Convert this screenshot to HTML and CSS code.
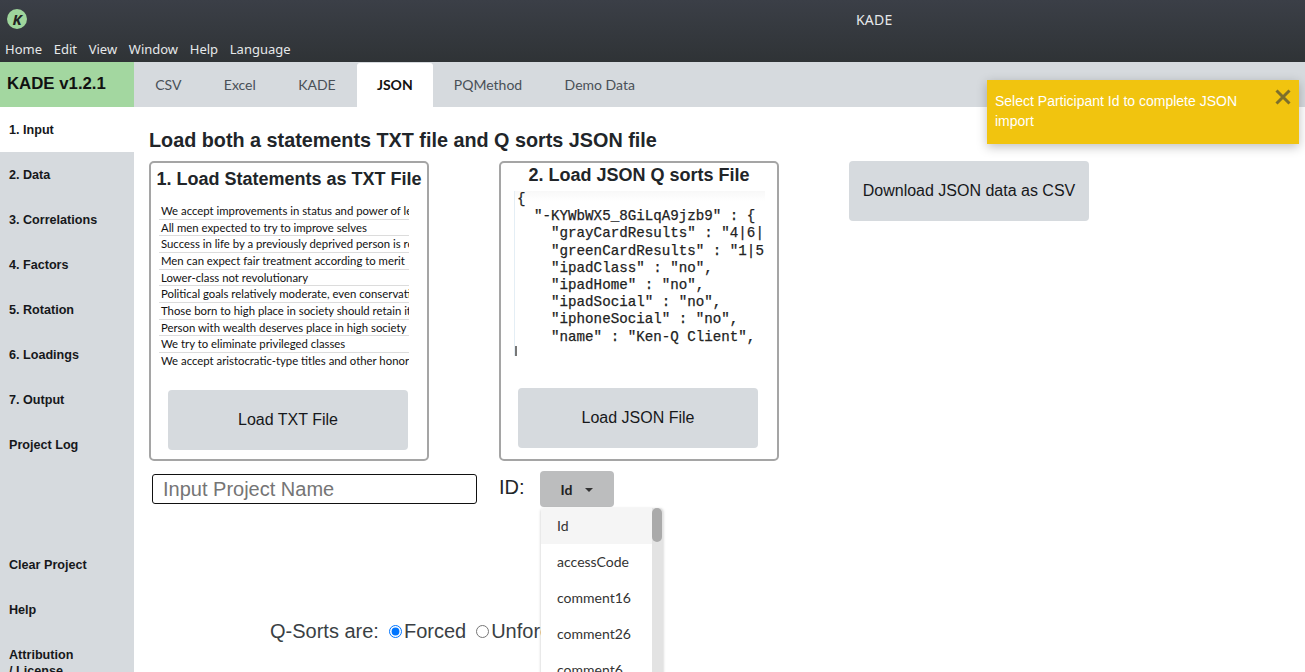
FILE: index.html
```html
<!doctype html>
<html lang="en">

<head>
    <meta charset="utf-8">
    <title>KADE</title>
    <link rel="stylesheet" href="styles.css">
</head>

<body>
<header class="titlebar">
    <div class="titlebar-top">
        <div class="logo">K</div>
        <div class="window-title">KADE</div>
    </div>
    <nav class="menubar">
        <span>Home</span>
        <span>Edit</span>
        <span>View</span>
        <span>Window</span>
        <span>Help</span>
        <span>Language</span>
    </nav>
</header>

<div class="tabrow">
    <div class="brand">KADE v1.2.1</div>
    <div class="tab">CSV</div>
    <div class="tab">Excel</div>
    <div class="tab">KADE</div>
    <div class="tab tab-active">JSON</div>
    <div class="tab">PQMethod</div>
    <div class="tab">Demo Data</div>
</div>

<div class="app">
    <aside class="sidebar">
        <div class="side-item side-active">1. Input</div>
        <div class="side-item">2. Data</div>
        <div class="side-item">3. Correlations</div>
        <div class="side-item">4. Factors</div>
        <div class="side-item">5. Rotation</div>
        <div class="side-item">6. Loadings</div>
        <div class="side-item">7. Output</div>
        <div class="side-item">Project Log</div>
        <div class="side-item side-gap">Clear Project</div>
        <div class="side-item">Help</div>
        <div class="side-item side-wrap">Attribution / License</div>
    </aside>

    <main class="content">
        <h1 class="page-title">Load both a statements TXT file and Q sorts JSON file</h1>

        <div class="cards">
            <section class="card">
                <h2 class="card-title card-title-txt">1. Load Statements as TXT File</h2>
                <ul class="statements">
                    <li>We accept improvements in status and power of leaders</li>
                    <li>All men expected to try to improve selves</li>
                    <li>Success in life by a previously deprived person is respected</li>
                    <li>Men can expect fair treatment according to merit</li>
                    <li>Lower-class not revolutionary</li>
                    <li>Political goals relatively moderate, even conservative</li>
                    <li>Those born to high place in society should retain it</li>
                    <li>Person with wealth deserves place in high society</li>
                    <li>We try to eliminate privileged classes</li>
                    <li>We accept aristocratic-type titles and other honors</li>
                </ul>
                <button class="btn btn-txt">Load TXT File</button>
            </section>

            <section class="card">
                <h2 class="card-title card-title-json">2. Load JSON Q sorts File</h2>
                <pre class="json-sample">{
  "-KYWbWX5_8GiLqA9jzb9" : {
    "grayCardResults" : "4|6|
    "greenCardResults" : "1|5
    "ipadClass" : "no",
    "ipadHome" : "no",
    "ipadSocial" : "no",
    "iphoneSocial" : "no",
    "name" : "Ken-Q Client",
<span class="cursor"></span></pre>
                <button class="btn btn-json">Load JSON File</button>
            </section>

            <button class="btn btn-download">Download JSON data as CSV</button>
        </div>

        <div class="id-row">
            <input class="project-input" placeholder="Input Project Name">
            <span class="id-label">ID:</span>
            <div class="dropdown">
                <div class="dropdown-btn">Id<span class="caret"></span></div>
                <div class="dropdown-menu">
                    <div class="dropdown-item dropdown-current">Id</div>
                    <div class="dropdown-item">accessCode</div>
                    <div class="dropdown-item">comment16</div>
                    <div class="dropdown-item">comment26</div>
                    <div class="dropdown-item">comment6</div>
                    <div class="scroll-thumb"></div>
                </div>
            </div>
        </div>

        <div class="sort-row">
            <span class="sort-label">Q-Sorts are:</span>
            <label class="radio"><input type="radio" name="sorts" checked>Forced</label>
            <label class="radio"><input type="radio" name="sorts">Unforced</label>
        </div>
    </main>
</div>

<!-- toast over the top right -->
<div class="toast">
    <span class="toast-text">Select Participant Id to complete JSON import</span>
    <span class="toast-close">
        <svg width="16" height="16" viewBox="0 0 16 16"><path d="M1.5 1.5 14.5 14.5M14.5 1.5 1.5 14.5" stroke="#7d6f2c" stroke-width="3" fill="none"/></svg>
    </span>
</div>
</body>

</html>
```

FILE: styles.css
```css
html, body {
    height: 100%;
}

body {
    margin: 0;
    overflow: hidden;
    background-color: #fff;
    color: #212529;
    font-family: "Liberation Sans", Arial, sans-serif;
}

/* title bar */
.titlebar {
    height: 62px;
    background: linear-gradient(#3b3f47, #2f3336);
    color: #e6e8ea;
    font-family: "Noto Sans", sans-serif;
}

.titlebar-top {
    height: 38px;
    display: flex;
    align-items: center;
}

.logo {
    width: 20px;
    height: 20px;
    margin-left: 7px;
    border-radius: 50%;
    background-color: #9fd69c;
    color: #222;
    font-size: 15px;
    font-weight: bold;
    font-style: italic;
    line-height: 20px;
    text-align: center;
}

.window-title {
    margin-left: 829px;
    font-size: 14px;
    letter-spacing: .2px;
}

.menubar {
    display: flex;
    gap: 11.7px;
    padding-left: 5px;
    font-size: 13px;
    line-height: 22px;
}

/* tabs */
.tabrow {
    height: 45px;
    display: flex;
    background-color: #d6dade;
    font-family: Lato, sans-serif;
    font-size: 14px;
    color: #495057;
}

.brand {
    width: 127px;
    padding-left: 7px;
    background-color: #a3d7a0;
    color: #111;
    font-family: "Liberation Sans", sans-serif;
    font-size: 16.8px;
    font-weight: bold;
    line-height: 44px;
}

.tab {
    padding: 0 21.2px;
    line-height: 46px;
}

.tab-active {
    margin-top: 1px;
    padding: 0 20px;
    background-color: #fff;
    border-radius: 3px 3px 0 0;
    color: #111;
    font-weight: bold;
    line-height: 44px;
}

/* sidebar + content */
.app {
    display: flex;
    height: 565px;
    overflow: hidden;
}

.sidebar {
    flex: 0 0 134px;
    background-color: #d6dade;
    font-size: 12.6px;
    font-weight: bold;
    color: #16181b;
}

.side-item {
    height: 45px;
    padding-left: 9px;
    line-height: 46px;
}

.side-active {
    background-color: #fff;
}

.side-gap {
    margin-top: 75px;
}

.side-wrap {
    width: 70px;
    line-height: 16px;
    padding-top: 15px;
}

.content {
    flex: 1;
    padding-left: 15px;
    min-width: 0;
}

.page-title {
    margin: 22px 0 9px;
    font-size: 19.8px;
    line-height: 23px;
}

.cards {
    display: flex;
    align-items: flex-start;
    gap: 70px;
}

.card {
    width: 276px;
    height: 296px;
    position: relative;
    display: flex;
    flex-direction: column;
    border: 2px solid #a5a5a5;
    border-radius: 5px;
}

.card-title {
    margin: 0;
    font-size: 18px;
    line-height: 21px;
    text-align: center;
    white-space: nowrap;
}

.card-title-txt {
    margin-top: 6px;
}

.card-title-json {
    margin-top: 2px;
}

.statements {
    width: 250px;
    height: 166px;
    margin: 13px 0 0 8px;
    padding: 0;
    list-style: none;
    overflow: hidden;
    font-family: Lato, sans-serif;
    font-size: 11.35px;
    color: #111;
}

.statements li {
    height: 15.67px;
    padding-left: 2px;
    border-bottom: 1px solid #dcdcdc;
    line-height: 15.67px;
    white-space: nowrap;
}

.statements li:last-child {
    border-bottom: 0;
}

.json-sample {
    width: 248px;
    height: 165px;
    margin: 5px 0 0 13px;
    padding-left: 2px;
    overflow: hidden;
    border-left: 1px solid #e4eef5;
    background: linear-gradient(#f8f8f8, #fff 10px);
    color: #222;
    font-family: "Liberation Mono", monospace;
    font-size: 14.2px;
    line-height: 17.2px;
    -webkit-text-stroke: .25px #222;
}

.cursor {
    display: inline-block;
    width: 2px;
    height: 12px;
    margin-left: -2px;
    vertical-align: 2px;
    background-color: #777;
}

.btn {
    width: 240px;
    height: 60px;
    border: 0;
    border-radius: 4px;
    background-color: #d6dade;
    color: #16181b;
    font-family: "Liberation Sans", sans-serif;
    font-size: 16px;
}

.btn-txt {
    margin: 21px 0 0 17px;
}

.btn-json {
    margin: 32px 0 0 17px;
}

.id-row {
    display: flex;
    align-items: flex-start;
    margin-top: 10px;
    height: 36px;
}

.project-input {
    box-sizing: border-box;
    width: 325px;
    height: 30px;
    margin: 3px 0 0 3px;
    padding: 0 10px;
    border: 1px solid #111;
    border-radius: 3px;
    font-family: "Liberation Sans", sans-serif;
    font-size: 20px;
}

.project-input::placeholder {
    color: #757575;
}

.id-label {
    margin-left: 22px;
    font-size: 20px;
    line-height: 32px;
}

.dropdown {
    position: relative;
    margin-left: 15px;
}

.dropdown-btn {
    display: flex;
    align-items: center;
    justify-content: center;
    width: 74px;
    height: 36px;
    border-radius: 4px;
    background-color: #bcbdbe;
    color: #222;
    font-family: Lato, sans-serif;
    font-size: 14px;
    font-weight: bold;
}

.caret {
    margin-left: 12px;
    margin-top: 2px;
    border-top: 4px solid #333;
    border-left: 4px solid transparent;
    border-right: 4px solid transparent;
}

.dropdown-menu {
    position: absolute;
    left: 1px;
    top: 37px;
    z-index: 5;
    width: 122px;
    height: 200px;
    overflow: hidden;
    background: linear-gradient(to left, #e3e3e3 11px, #fff 11px);
    box-shadow: 0 1px 3px rgba(0, 0, 0, .25);
    border-radius: 3px 3px 0 0;
    font-family: Lato, sans-serif;
    font-size: 14px;
    color: #333;
}

.dropdown-item {
    width: 94.5px;
    height: 36px;
    padding-left: 16.5px;
    line-height: 36px;
}

.dropdown-current {
    background-color: #f5f5f5;
}

.scroll-thumb {
    position: absolute;
    right: 1px;
    top: 0;
    width: 10px;
    height: 34px;
    border-radius: 5px;
    background-color: #aaa;
}

.sort-row {
    display: flex;
    align-items: center;
    margin: 113px 0 0 121px;
    font-size: 20px;
    color: #3a3f44;
}

.sort-label {
    margin-right: 7px;
}

.radio {
    display: flex;
    align-items: center;
    margin-right: 7px;
}

.radio input {
    margin: 0 2px 0 3px;
}

/* toast */
.toast {
    position: absolute;
    left: 987px;
    top: 80px;
    box-sizing: border-box;
    width: 312px;
    height: 64px;
    padding: 11px 8px;
    display: flex;
    justify-content: space-between;
    background-color: #f1c40f;
    box-shadow: 0 3px 10px rgba(0, 0, 0, .25);
    color: #fff;
    font-size: 14px;
    line-height: 20px;
}

.toast-text {
    width: 262px;
}

.toast-close {
    margin: -2px 0 0 0;
    line-height: 0;
}
```
